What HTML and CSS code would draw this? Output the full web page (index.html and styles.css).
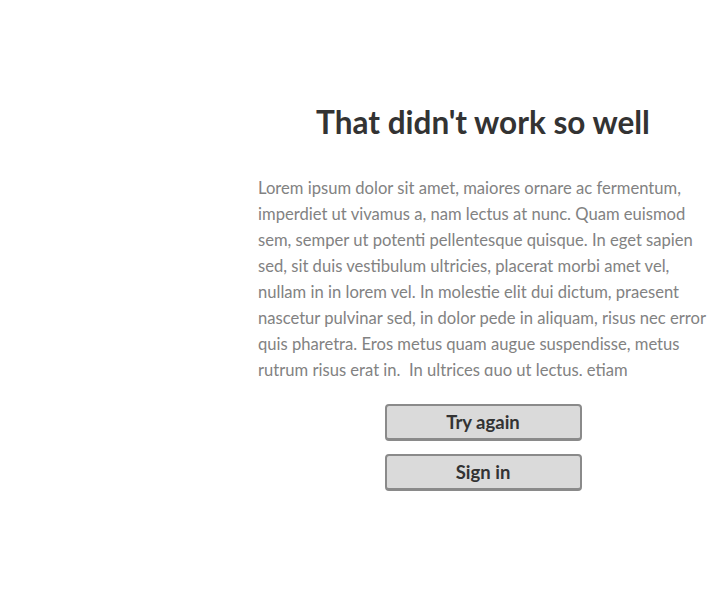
FILE: index.html
```html
<!DOCTYPE html>
<html>
<head>
<meta charset="utf-8">
<link rel="stylesheet" href="styles.css">
</head>
<body>
<main class="panel">
  <h1 class="title">That didn't work so well</h1>
  <div class="message">
    <p>Lorem ipsum dolor sit amet, maiores ornare ac fermentum, imperdiet ut vivamus a, nam lectus at nunc. Quam euismod sem, semper ut potenti pellentesque quisque. In eget sapien sed, sit duis vestibulum ultricies, placerat morbi amet vel, nullam in in lorem vel. In molestie elit dui dictum, praesent nascetur pulvinar sed, in dolor pede in aliquam, risus nec error quis pharetra. Eros metus quam augue suspendisse, metus rutrum risus erat in.&nbsp; In ultrices quo ut lectus, etiam vestibulum urna, a est pretium luctus euismod nisl, pellentesque turpis hac ridiculus massa.</p>
  </div>
  <div class="actions">
    <button class="btn">Try again</button>
    <button class="btn">Sign in</button>
  </div>
</main>
</body>
</html>
```
FILE: styles.css
```css
html, body {
  margin: 0;
  padding: 0;
  background: #ffffff;
}
body {
  font-family: Lato, "Open Sans", sans-serif;
}
.panel {
  width: 450px;
  margin-left: 258px;
  padding-top: 102px;
  display: flex;
  flex-direction: column;
  align-items: center;
}
.title {
  margin: 0;
  font-size: 31.5px;
  line-height: 40px;
  font-weight: 700;
  color: #333333;
  text-align: center;
}
.message {
  margin-top: 33px;
  height: 201px;
  overflow: hidden;
  width: 452px;
  align-self: flex-start;
}
.message p {
  margin: 0;
  font-size: 16.6px;
  line-height: 26px;
  color: #828282;
}
.actions {
  margin-top: 28px;
  display: flex;
  flex-direction: column;
  gap: 13px;
  align-items: center;
}
.btn {
  width: 197px;
  height: 37px;
  box-sizing: border-box;
  background: #dadada;
  border: 2px solid #8a8a8a;
  border-bottom-width: 3px;
  border-radius: 4px;
  font-family: Lato, "Open Sans", sans-serif;
  font-size: 18.5px;
  line-height: 22px;
  font-weight: 700;
  color: #333333;
  padding: 0;
}
```
